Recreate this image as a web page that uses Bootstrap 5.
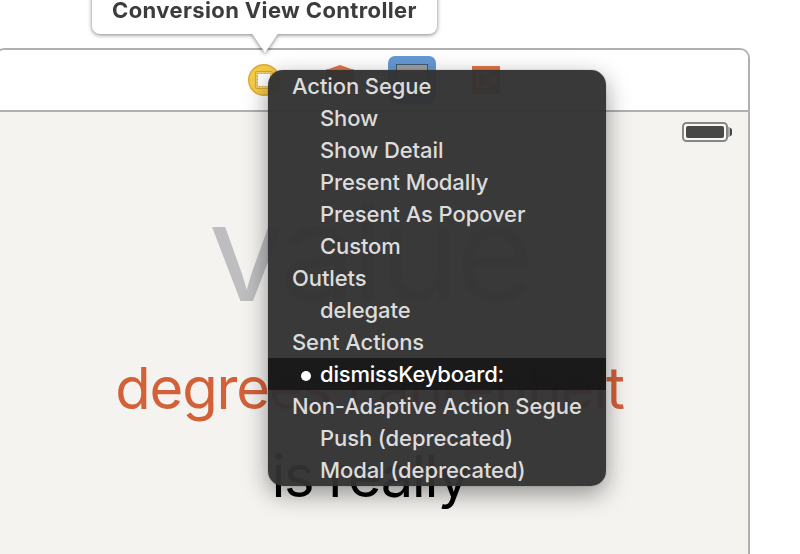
<!DOCTYPE html>
<html lang="en">
<head>
<meta charset="utf-8">
<meta name="viewport" content="width=device-width, initial-scale=1">
<title>Conversion View Controller</title>
<link href="https://cdn.jsdelivr.net/npm/bootstrap@5.3.0/dist/css/bootstrap.min.css" rel="stylesheet">
<style>
body{width:800px;height:554px;background:#fff;font-family:Inter,"Liberation Sans",sans-serif;color:#3c3c3c}
.scene{width:758px;height:520px;margin:48px 0 0 -8px;border:2px solid #b0b0b0;border-radius:13px 10px 0 0;background:#f4f3f0}
.dock{height:62px;background:#fff;border-bottom:2px solid #b0b0b0;border-radius:11px 8px 0 0;padding-left:254px;padding-top:6px}
.dock svg{display:block;width:256px;height:48px}
.status{height:40px;padding:10px 16px 0 0}
.status svg{width:50px;height:20px;display:block}
.label{white-space:nowrap;text-align:center}
.value{font-size:136px;line-height:160px;margin-top:20px;color:#bebec1;letter-spacing:-4.8px;padding-right:4px}
.degrees{font-size:58px;line-height:70px;margin-top:21px;color:#d2613a;letter-spacing:-1.2px;padding-right:3px}
.really{font-size:58px;line-height:70px;margin-top:18px;color:#000;letter-spacing:-1.4px;padding-right:2px}
.bubble{left:92px;top:-20px;width:345px;height:54px;background:#fff;border-radius:8px;filter:drop-shadow(0 1px 2px rgba(0,0,0,.5));z-index:1}
.bubble-title{font-size:22px;line-height:26px;font-weight:700;margin-top:17px;letter-spacing:.37px;white-space:nowrap;text-align:center}
.tip{left:158px;top:53px;width:30px;height:20px}
.hud{left:268px;top:70px;width:338px;height:416px;border-radius:15px;background:rgba(50,50,50,.965);box-shadow:0 0 1px rgba(0,0,0,.5),0 8px 24px rgba(0,0,0,.4);color:#dcdcdc;overflow:hidden;z-index:2}
.entry{height:32px;line-height:32px;font-size:22px;font-weight:500;padding-left:24px;letter-spacing:-.1px;white-space:nowrap}
.sub{padding-left:52px}
.chosen{background:rgba(20,20,20,.82);color:#fff;padding-left:33px;letter-spacing:-.2px}
.dot{width:10px;height:10px;margin:3px 9px 0 0;background:#fff}
</style>
</head>
<body class="position-relative overflow-hidden d-flex">
<main class="scene flex-shrink-0">
  <div class="dock">
    <svg viewBox="248 56 256 48">
      <circle cx="264" cy="80" r="15.3" fill="#f5cc46" stroke="#dca936" stroke-width="1.4"/>
      <rect x="255.7" y="71.7" width="16.6" height="16.6" rx="1" fill="#f8dc83" stroke="#d9a633" stroke-width="1.3"/>
      <rect x="257.5" y="73.5" width="13" height="13" fill="#fff" stroke="#d9a633" stroke-dasharray="2 1"/>
      <path d="M340 65l14 5v18l-14 7-14-7V70z" fill="#df7547"/>
      <path d="M326 70l14 5 14-5M340 75v20" fill="none" stroke="#c65e36" stroke-width="1.5"/>
      <rect x="388" y="56" width="48" height="48" rx="7" fill="#6699d3"/>
      <rect x="396.5" y="64.5" width="31" height="31" fill="#a0a0a0" stroke="#3e5878"/>
      <rect x="472" y="66" width="28" height="28" fill="#df7547"/>
      <path d="M488 77v-4h-10v14h10v-4M483 80h13m-4-4l4 4-4 4" fill="none" stroke="#fff" stroke-width="1.5"/>
    </svg>
  </div>
  <div class="status d-flex justify-content-end">
    <svg viewBox="0 0 50 20"><rect x="1" y="1" width="44" height="18" rx="3.5" fill="#f8f8f6" stroke="#868684" stroke-width="2"/><rect x="4" y="4" width="38" height="12" rx="2" fill="#484846"/><path d="M46 5h2v10h-2z" fill="#aaa"/><path d="M48 6q2 0 2 2v4q0 2-2 2z" fill="#484846"/></svg>
  </div>
  <div class="label value"><span>value</span></div>
  <div class="label degrees"><span>degrees Fahrenheit</span></div>
  <div class="label really"><span>is really</span></div>
</main>
<div class="bubble position-absolute">
  <div class="bubble-title"><span>Conversion View Controller</span></div>
  <svg class="tip position-absolute" viewBox="0 0 30 20"><path d="M0 0h30q-2 .5-3 2L15 20 3 2Q2 .5 0 0z" fill="#fff"/></svg>
</div>
<div class="hud position-absolute">
  <div class="entry"><span>Action Segue</span></div>
  <div class="entry sub"><span>Show</span></div>
  <div class="entry sub"><span>Show Detail</span></div>
  <div class="entry sub"><span>Present Modally</span></div>
  <div class="entry sub"><span>Present As Popover</span></div>
  <div class="entry sub"><span>Custom</span></div>
  <div class="entry"><span>Outlets</span></div>
  <div class="entry sub"><span>delegate</span></div>
  <div class="entry"><span>Sent Actions</span></div>
  <div class="entry chosen d-flex align-items-center"><i class="dot rounded-circle"></i><span>dismissKeyboard:</span></div>
  <div class="entry"><span>Non-Adaptive Action Segue</span></div>
  <div class="entry sub"><span>Push (deprecated)</span></div>
  <div class="entry sub"><span>Modal (deprecated)</span></div>
</div>
<script src="https://cdn.jsdelivr.net/npm/bootstrap@5.3.0/dist/js/bootstrap.bundle.min.js"></script>
</body>
</html>
